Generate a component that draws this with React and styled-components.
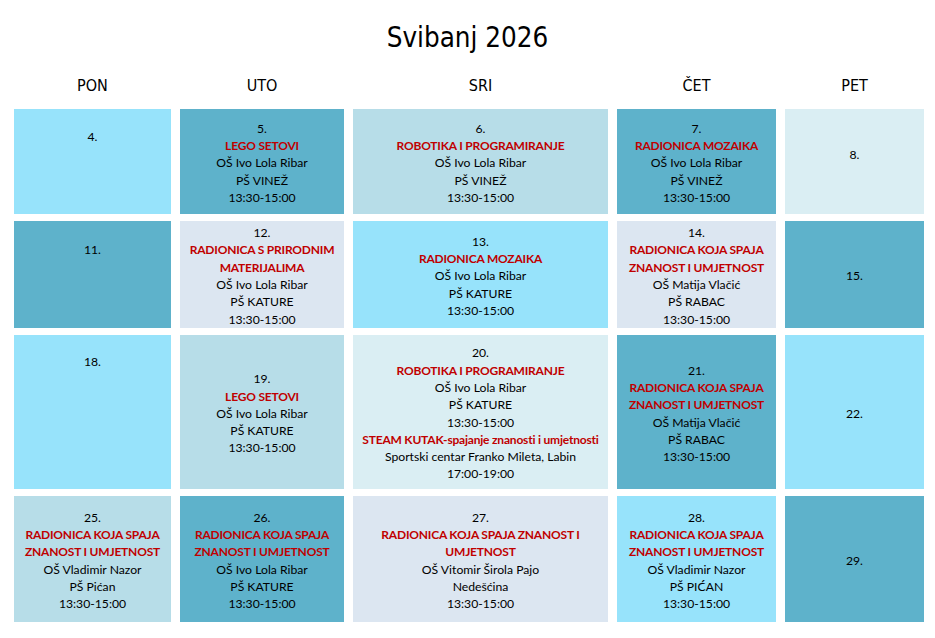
import React from 'react';
import styled, { createGlobalStyle } from 'styled-components';

const Global = createGlobalStyle`
  html, body { margin: 0; padding: 0; background: #ffffff; }
  body { font-family: "Lato", "Liberation Sans", sans-serif; color: #000; }
`;

const COLORS = {
  cyan: '#97e3fb',
  teal: '#5eb2cb',
  blue: '#b7dde8',
  pale: '#daeef3',
  gray: '#dce6f1',
};

const Page = styled.div`
  width: 935px;
  height: 638px;
  box-sizing: border-box;
  padding: 20px 0 0 14px;
  overflow: hidden;
`;

const Title = styled.h1`
  margin: 0 0 18px -14px;
  width: 935px;
  text-align: center;
  font-family: "DejaVu Sans Condensed", "DejaVu Sans", sans-serif;
  font-weight: normal;
  font-size: 27.5px;
  line-height: 34px;
  color: #000;
`;

const Grid = styled.div`
  display: grid;
  grid-template-columns: 157px 164px 255px 159px 139px;
  grid-template-rows: 30px 105px 107px 154px 126px;
  column-gap: 9px;
  row-gap: 7px;
`;

const DayHead = styled.div`
  display: flex;
  align-items: center;
  justify-content: center;
  padding-bottom: 4px;
  font-family: "DejaVu Sans Condensed", "DejaVu Sans", sans-serif;
  font-size: 16px;
  color: #000;
`;

const Cell = styled.div`
  background: ${(p) => COLORS[p.$bg]};
  display: flex;
  flex-direction: column;
  align-items: center;
  justify-content: center;
  text-align: center;
  box-sizing: border-box;
  padding-top: 3px;
  overflow: hidden;
`;

const Line = styled.div`
  font-size: ${(p) => (p.$red ? '12px' : '12.2px')};
  letter-spacing: ${(p) => (p.$red ? '-0.2px' : '0')};
  line-height: 17.3px;
  white-space: nowrap;
  font-weight: ${(p) => (p.$red ? 700 : 400)};
  color: ${(p) => (p.$red ? '#c00000' : '#000')};
`;

const DAYS = ['PON', 'UTO', 'SRI', 'ČET', 'PET'];

const std = (school, site, time = '13:30-15:00') => [
  { t: school },
  { t: site },
  { t: time },
];

const CELLS = [
  { d: '4.', bg: 'cyan', lines: [], blank: 3 },
  { d: '5.', bg: 'teal', lines: [{ t: 'LEGO SETOVI', r: 1 }, ...std('OŠ Ivo Lola Ribar', 'PŠ VINEŽ')] },
  { d: '6.', bg: 'blue', lines: [{ t: 'ROBOTIKA I PROGRAMIRANJE', r: 1 }, ...std('OŠ Ivo Lola Ribar', 'PŠ VINEŽ')] },
  { d: '7.', bg: 'teal', lines: [{ t: 'RADIONICA MOZAIKA', r: 1 }, ...std('OŠ Ivo Lola Ribar', 'PŠ VINEŽ')] },
  { d: '8.', bg: 'pale', lines: [], blank: 1 },

  { d: '11.', bg: 'teal', lines: [], blank: 3 },
  { d: '12.', bg: 'gray', lines: [{ t: 'RADIONICA S PRIRODNIM', r: 1 }, { t: 'MATERIJALIMA', r: 1 }, ...std('OŠ Ivo Lola Ribar', 'PŠ KATURE')] },
  { d: '13.', bg: 'cyan', lines: [{ t: 'RADIONICA MOZAIKA', r: 1 }, ...std('OŠ Ivo Lola Ribar', 'PŠ KATURE')] },
  { d: '14.', bg: 'gray', lines: [{ t: 'RADIONICA KOJA SPAJA', r: 1 }, { t: 'ZNANOST I UMJETNOST', r: 1 }, ...std('OŠ Matija Vlačić', 'PŠ RABAC')] },
  { d: '15.', bg: 'teal', lines: [] },

  { d: '18.', bg: 'cyan', lines: [], blank: 6, shift: 4 },
  { d: '19.', bg: 'blue', lines: [{ t: 'LEGO SETOVI', r: 1 }, ...std('OŠ Ivo Lola Ribar', 'PŠ KATURE')] },
  {
    d: '20.',
    bg: 'pale',
    lines: [
      { t: 'ROBOTIKA I PROGRAMIRANJE', r: 1 },
      ...std('OŠ Ivo Lola Ribar', 'PŠ KATURE'),
      { t: 'STEAM KUTAK-spajanje znanosti i umjetnosti', r: 1 },
      { t: 'Sportski centar Franko Mileta, Labin' },
      { t: '17:00-19:00' },
    ],
  },
  { d: '21.', bg: 'teal', lines: [{ t: 'RADIONICA KOJA SPAJA', r: 1 }, { t: 'ZNANOST I UMJETNOST', r: 1 }, ...std('OŠ Matija Vlačić', 'PŠ RABAC')] },
  { d: '22.', bg: 'cyan', lines: [] },

  { d: '25.', bg: 'blue', lines: [{ t: 'RADIONICA KOJA SPAJA', r: 1 }, { t: 'ZNANOST I UMJETNOST', r: 1 }, ...std('OŠ Vladimir Nazor', 'PŠ Pićan')] },
  { d: '26.', bg: 'teal', lines: [{ t: 'RADIONICA KOJA SPAJA', r: 1 }, { t: 'ZNANOST I UMJETNOST', r: 1 }, ...std('OŠ Ivo Lola Ribar', 'PŠ KATURE')] },
  { d: '27.', bg: 'gray', lines: [{ t: 'RADIONICA KOJA SPAJA ZNANOST I', r: 1 }, { t: 'UMJETNOST', r: 1 }, ...std('OŠ Vitomir Širola Pajo', 'Nedešćina')] },
  { d: '28.', bg: 'cyan', lines: [{ t: 'RADIONICA KOJA SPAJA', r: 1 }, { t: 'ZNANOST I UMJETNOST', r: 1 }, ...std('OŠ Vladimir Nazor', 'PŠ PIĆAN')] },
  { d: '29.', bg: 'teal', lines: [] },
];

const Spacer = styled.div`
  height: ${(p) => p.$h}px;
`;

function DayCell({ cell }) {
  const blanks = Array.from({ length: cell.blank || 0 });
  return (
    <Cell $bg={cell.bg}>
      <Line>{cell.d}</Line>
      {cell.lines.map((l, i) => (
        <Line key={i} $red={!!l.r}>
          {l.t}
        </Line>
      ))}
      {blanks.map((_, i) => (
        <Line key={'b' + i}>{'\u00a0'}</Line>
      ))}
      {cell.shift ? <Spacer $h={-cell.shift} /> : null}
    </Cell>
  );
}

export default function App() {
  return (
    <Page>
      <Global />
      <Title>Svibanj 2026</Title>
      <Grid>
        {DAYS.map((d) => (
          <DayHead key={d}>{d}</DayHead>
        ))}
        {CELLS.map((c) => (
          <DayCell key={c.d} cell={c} />
        ))}
      </Grid>
    </Page>
  );
}
